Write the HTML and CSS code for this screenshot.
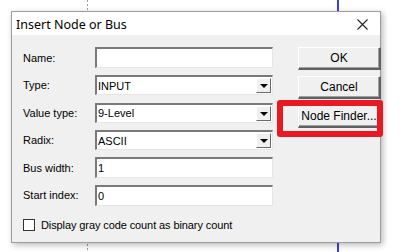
FILE: index.html
```html
<!DOCTYPE html>
<html lang="en">
<head>
	<meta charset="UTF-8">
	<title>Insert Node or Bus</title>
	<link rel="stylesheet" href="styles.css">
</head>
<body>
	<div id="canvas">
		<div id="dialog">
			<div class="titlebar">
				<span class="title">Insert Node or Bus</span>
				<svg class="close" width="11" height="11" viewBox="0 0 11 11">
					<path d="M0.5 0.5 L10.5 10.5 M10.5 0.5 L0.5 10.5" stroke="#222" stroke-width="1.1" fill="none"/>
				</svg>
			</div>
			<div class="dlgbody">
				<div class="form">
					<div class="row">
						<label>Name:</label>
						<div class="field"></div>
					</div>
					<div class="row">
						<label>Type:</label>
						<div class="field combo"><span>INPUT</span><div class="drop"></div></div>
					</div>
					<div class="row">
						<label>Value type:</label>
						<div class="field combo"><span>9-Level</span><div class="drop"></div></div>
					</div>
					<div class="row">
						<label>Radix:</label>
						<div class="field combo"><span>ASCII</span><div class="drop"></div></div>
					</div>
					<div class="row">
						<label>Bus width:</label>
						<div class="field"><span>1</span></div>
					</div>
					<div class="row">
						<label>Start index:</label>
						<div class="field"><span>0</span></div>
					</div>
					<div class="check">
						<div class="box"></div>
						<span>Display gray code count as binary count</span>
					</div>
				</div>
				<div class="buttons">
					<div class="btn">OK</div>
					<div class="btn">Cancel</div>
					<div class="btn">Node Finder...</div>
				</div>
				<div class="highlight"></div>
			</div>
		</div>
	</div>
</body>
</html>
```

FILE: styles.css
```css
body {
	margin: 0;
	background-color: #fff;
	font-family: "Liberation Sans", Arial, sans-serif;
}
#canvas {
	width: 401px;
	height: 252px;
	padding: 11px 0 0 11px;
	box-sizing: border-box;
	background:
		linear-gradient(#3a3cf5, #3a3cf5) 337px 0 / 2px 100% no-repeat,
		repeating-linear-gradient(to bottom, #9a9a9a 0 2px, transparent 2px 4px) 87px 0 / 1px 100% no-repeat,
		#fff;
}
#dialog {
	width: 370px;
	height: 232px;
	box-sizing: border-box;
	border: 1px solid #9c9c9c;
	background-color: #f0f0f0;
	box-shadow: 2px 2px 6px rgba(0, 0, 0, 0.28);
}
.titlebar {
	height: 23px;
	background-color: #fff;
	display: flex;
	align-items: center;
	justify-content: space-between;
	padding: 0 12px 0 4px;
}
.title {
	font-family: "Noto Sans", sans-serif;
	font-size: 12.5px;
	color: #000;
	margin-top: 1px;
}
.close {
	display: block;
	margin-top: 2px;
}
.dlgbody {
	position: relative;
	display: flex;
	padding: 12px 0 0 11px;
	font-size: 11px;
	color: #000;
}
.form {
	width: 250px;
	display: flex;
	flex-direction: column;
	gap: 6.5px;
}
.row {
	display: flex;
	align-items: center;
	height: 21px;
}
.row label {
	width: 72px;
}
.field {
	width: 178px;
	height: 21px;
	box-sizing: border-box;
	background-color: #fff;
	border-top: 2px solid #7a7a7a;
	border-left: 2px solid #7a7a7a;
	border-right: 1px solid #e6e6e6;
	border-bottom: 1px solid #e6e6e6;
	display: flex;
	align-items: center;
	justify-content: space-between;
	padding-left: 1px;
}
.combo {
	height: 20px;
	padding-right: 1px;
}
.drop {
	width: 15px;
	height: 15px;
	box-sizing: border-box;
	background-color: #f0f0f0;
	border-top: 1px solid #fff;
	border-left: 1px solid #fff;
	border-right: 1px solid #6a6a6a;
	border-bottom: 1px solid #6a6a6a;
	display: flex;
	align-items: center;
	justify-content: center;
}
.drop::after {
	content: "";
	border-left: 4px solid transparent;
	border-right: 4px solid transparent;
	border-top: 4px solid #000;
	margin-top: 1px;
}
.check {
	display: flex;
	align-items: center;
	gap: 6px;
	margin-top: 7px;
	letter-spacing: -0.1px;
}
.box {
	width: 12px;
	height: 12px;
	box-sizing: border-box;
	background-color: #fff;
	border: 1px solid #333;
}
.buttons {
	margin-left: 25px;
	display: flex;
	flex-direction: column;
	gap: 6px;
}
.btn {
	width: 83px;
	height: 23px;
	box-sizing: border-box;
	background-color: #f0f0f0;
	border-top: 1px solid #fff;
	border-left: 1px solid #fff;
	border-right: 2px solid #606060;
	border-bottom: 2px solid #606060;
	box-shadow: inset -1px -1px 0 #a0a0a0;
	display: flex;
	align-items: center;
	justify-content: center;
	font-size: 12px;
}
.highlight {
	position: absolute;
	left: 265px;
	top: 65px;
	width: 106px;
	height: 37px;
	box-sizing: border-box;
	border: 6px solid #ea1822;
	border-radius: 3px;
}
```
